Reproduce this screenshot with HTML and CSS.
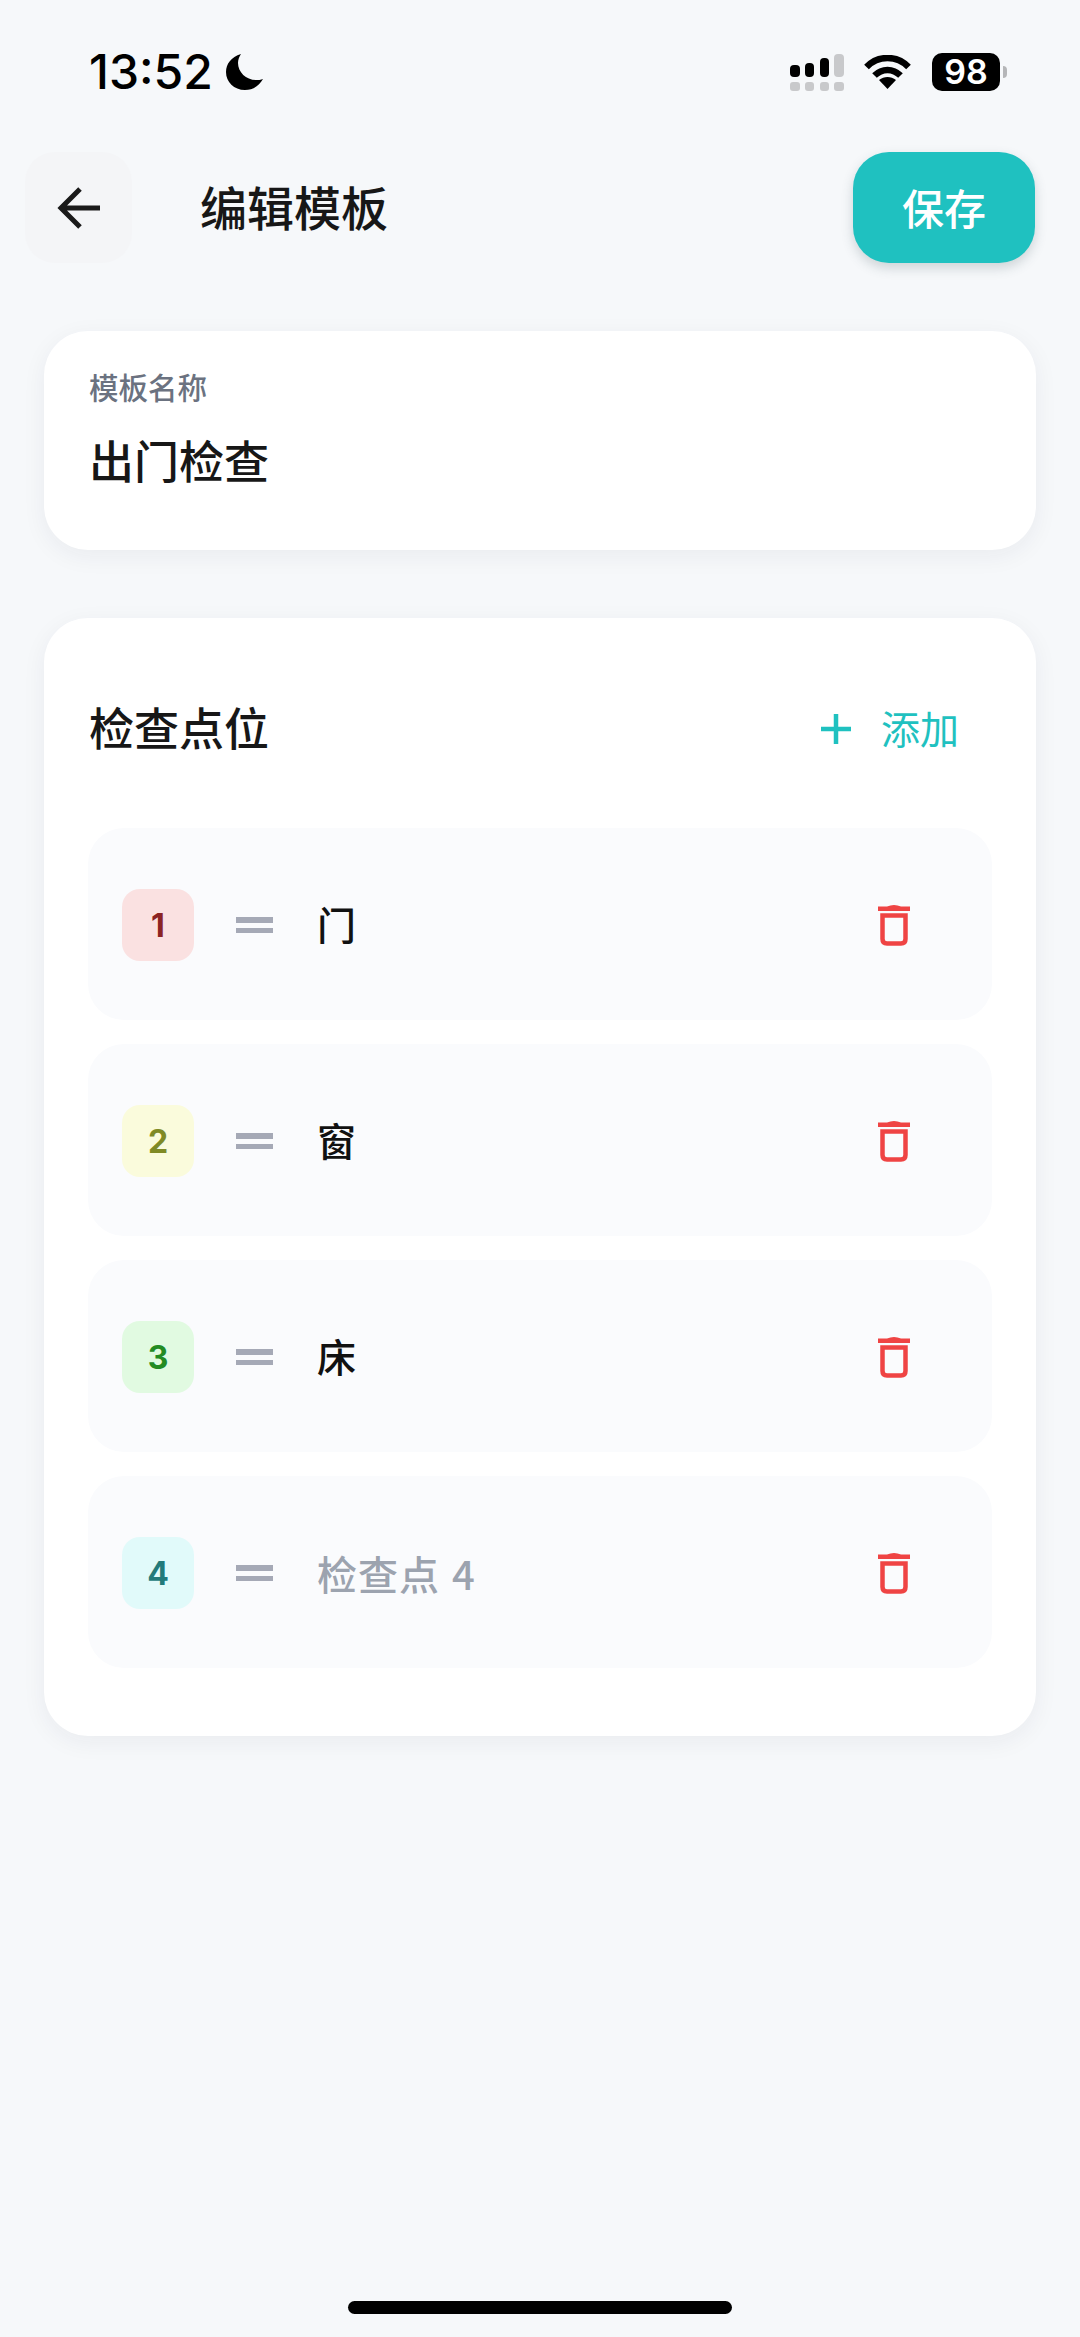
FILE: index.html
```html
<!DOCTYPE html>
<html lang="zh-CN">
<head>
    <meta charset="UTF-8">
    <meta name="viewport" content="width=device-width, initial-scale=1.0">
    <title>编辑模板</title>
    <link rel="stylesheet" href="styles.css">
</head>
<body>
    <div class="status-bar">
        <div class="status-left">
            <span class="time">13:52</span>
            <svg class="moon" viewBox="0 0 37 36"><path d="M15 0C5 3 0 10 0 18c0 10 8 18 19 18 8 0 14-4 18-11-2 1-5 1-7 1-10 0-18-8-18-17 0-3 1-6 3-9z"/></svg>
        </div>
        <div class="status-right">
            <div class="signal">
                <div class="signal-bars">
                    <i class="bar bar-1"></i>
                    <i class="bar bar-2"></i>
                    <i class="bar bar-3"></i>
                    <i class="bar bar-4"></i>
                </div>
                <div class="signal-dots">
                    <i></i><i></i><i></i><i></i>
                </div>
            </div>
            <svg class="wifi" viewBox="0 0 47 34">
                <path class="wifi-arc" d="M2.500 12C14 0 33 0 44.500 12"/>
                <path class="wifi-arc" d="M10.500 20.500C18 13 29 13 36.500 20.500"/>
                <path d="M23.500 34L15 25c5-4 12-4 17 0z"/>
            </svg>
            <div class="battery">98</div>
            <div class="battery-nub"></div>
        </div>
    </div>

    <div class="header">
        <div class="back-btn">
            <svg class="back-icon" viewBox="0 0 44 44"><path d="M43 22H4M23 3L4 22l19 19"/></svg>
        </div>
        <div class="title">编辑模板</div>
        <div class="save-btn"><span class="save-text">保存</span></div>
    </div>

    <div class="card name-card">
        <div class="name-label">模板名称</div>
        <div class="name-value">出门检查</div>
    </div>

    <div class="card points-card">
        <div class="points-head">
            <div class="points-title">检查点位</div>
            <div class="add-btn">
                <svg class="plus" viewBox="0 0 30 30"><path d="M0 15h30M15 0v30"/></svg>
                <span class="add-text">添加</span>
            </div>
        </div>

        <div class="point-list">
            <div class="point">
                <div class="badge badge-red">1</div>
                <div class="drag"><i></i><i></i></div>
                <div class="point-name">门</div>
                <svg class="trash" viewBox="0 0 32 42"><path class="trash-lid" d="M0 2.500h32v4.500H0zM9 2.500Q16 -0.500 23 2.500z"/><path class="trash-body" d="M4.500 11.500h23V35q0 4.500-4.500 4.500H9q-4.500 0-4.500-4.500z"/></svg>
            </div>
            <div class="point">
                <div class="badge badge-yellow">2</div>
                <div class="drag"><i></i><i></i></div>
                <div class="point-name">窗</div>
                <svg class="trash" viewBox="0 0 32 42"><path class="trash-lid" d="M0 2.500h32v4.500H0zM9 2.500Q16 -0.500 23 2.500z"/><path class="trash-body" d="M4.500 11.500h23V35q0 4.500-4.500 4.500H9q-4.500 0-4.500-4.500z"/></svg>
            </div>
            <div class="point">
                <div class="badge badge-green">3</div>
                <div class="drag"><i></i><i></i></div>
                <div class="point-name">床</div>
                <svg class="trash" viewBox="0 0 32 42"><path class="trash-lid" d="M0 2.500h32v4.500H0zM9 2.500Q16 -0.500 23 2.500z"/><path class="trash-body" d="M4.500 11.500h23V35q0 4.500-4.500 4.500H9q-4.500 0-4.500-4.500z"/></svg>
            </div>
            <div class="point">
                <div class="badge badge-cyan">4</div>
                <div class="drag"><i></i><i></i></div>
                <div class="point-name placeholder">检查点 4</div>
                <svg class="trash" viewBox="0 0 32 42"><path class="trash-lid" d="M0 2.500h32v4.500H0zM9 2.500Q16 -0.500 23 2.500z"/><path class="trash-body" d="M4.500 11.500h23V35q0 4.500-4.500 4.500H9q-4.500 0-4.500-4.500z"/></svg>
            </div>
        </div>
    </div>

    <div class="home-bar"></div>
</body>
</html>
```

FILE: styles.css
```css
* {
    box-sizing: border-box;
}
html, body {
    height: 100%;
}
body {
    margin: 0;
    display: flex;
    flex-direction: column;
    font-family: "Noto Sans CJK SC", "Noto Sans", sans-serif;
    background: #f6f8fa;
    color: #111;
}

/* status bar */
.status-bar {
    height: 152px;
    padding: 0 73px 8px 89px;
    display: flex;
    align-items: center;
    justify-content: space-between;
}
.status-left {
    display: flex;
    align-items: center;
    gap: 13px;
}
.time {
    font-family: Inter, sans-serif;
    font-size: 48px;
    font-weight: 500;
    line-height: 1;
    color: #000;
}
.moon {
    width: 37px;
    height: 36px;
    display: block;
}
.status-right {
    display: flex;
    align-items: center;
}
.signal {
    width: 54px;
    margin-right: 20px;
}
.signal-bars, .signal-dots {
    display: flex;
    justify-content: space-between;
}
.signal-bars {
    height: 23px;
    align-items: flex-end;
    margin-bottom: 5px;
}
.bar {
    width: 9.5px;
    background: #000;
    border-radius: 4px;
}
.bar-1 { height: 12px; }
.bar-2 { height: 14px; }
.bar-3 { height: 19px; }
.bar-4 { height: 23px; background: #c8c9cb; }
.signal-dots i {
    width: 9.5px;
    height: 9px;
    border-radius: 3px;
    background: #c8c9cb;
}
.wifi {
    width: 47px;
    height: 34px;
    margin-right: 21px;
}
.wifi-arc {
    fill: none;
    stroke: #000;
    stroke-width: 6.5;
}
.battery {
    width: 68px;
    height: 38px;
    border-radius: 10px;
    background: #000;
    color: #fff;
    font-family: Inter, sans-serif;
    font-size: 34px;
    font-weight: 600;
    line-height: 38px;
    text-align: center;
}
.battery-nub {
    width: 4px;
    height: 12px;
    margin-left: 3px;
    border-radius: 0 6px 6px 0;
    background: #b5b6b8;
}

/* header */
.header {
    height: 111px;
    padding: 0 45px 0 25px;
    display: flex;
    align-items: center;
    flex-shrink: 0;
}
.back-btn {
    width: 107px;
    height: 111px;
    border-radius: 30px;
    background: #f4f5f7;
    display: flex;
    align-items: center;
    justify-content: center;
}
.back-icon {
    width: 44px;
    height: 44px;
    fill: none;
    stroke: #1a1a1a;
    stroke-width: 5;
}
.title {
    margin: 0 0 5px 68px;
    font-size: 47px;
    font-weight: 500;
    color: #171717;
}
.save-btn {
    margin-left: auto;
    width: 182px;
    height: 111px;
    border-radius: 36px;
    background: #1fc1c0;
    color: #fff;
    font-size: 42px;
    font-weight: 500;
    display: flex;
    align-items: center;
    justify-content: center;
    box-shadow: 0 5px 12px rgba(60, 80, 90, 0.22);
}
.save-text {
    margin-bottom: 3px;
}

/* cards */
.card {
    margin: 68px 44px 0;
    background: #fff;
    border-radius: 44px;
    box-shadow: 0 6px 24px rgba(30, 40, 60, 0.06);
    flex-shrink: 0;
}
.name-card {
    height: 219px;
    padding: 33px 45px 0;
}
.name-label {
    font-size: 29.5px;
    line-height: 44px;
    font-weight: 500;
    color: #6b7280;
}
.name-value {
    margin-top: 22px;
    font-size: 45px;
    line-height: 60px;
    font-weight: 500;
    color: #171717;
}
.points-card {
    padding: 68px 44px;
}
.points-head {
    height: 86px;
    margin-bottom: 56px;
    display: flex;
    align-items: center;
    justify-content: space-between;
}
.points-title {
    margin: 0 0 5px 1px;
    font-size: 45px;
    font-weight: 500;
    color: #171717;
}
.add-btn {
    display: flex;
    align-items: center;
    gap: 30px;
    padding-right: 33px;
    font-size: 39px;
    color: #1fc1c0;
}
.add-text {
    margin-bottom: 5px;
}
.plus {
    width: 30px;
    height: 30px;
    fill: none;
    stroke: #1fc1c0;
    stroke-width: 4.5;
}

/* point rows */
.point-list {
    display: flex;
    flex-direction: column;
    gap: 24px;
}
.point {
    height: 192px;
    padding: 2px 82px 0 34px;
    border-radius: 36px;
    background: #fafbfd;
    display: flex;
    align-items: center;
}
.badge {
    width: 72px;
    height: 72px;
    border-radius: 18px;
    font-family: Inter, sans-serif;
    font-size: 32px;
    font-weight: 700;
    display: flex;
    align-items: center;
    justify-content: center;
}
.badge-red { background: #fae1e1; color: #8b2323; }
.badge-yellow { background: #fafbdc; color: #7f8a25; }
.badge-green { background: #e1fae1; color: #238b23; }
.badge-cyan { background: #e1fafa; color: #237a7a; }
.drag {
    width: 37px;
    margin-left: 42px;
    display: flex;
    flex-direction: column;
    gap: 5px;
}
.drag i {
    height: 5.5px;
    background: #a5a9b6;
}
.point-name {
    margin: 0 0 5px 44px;
    font-size: 39px;
    font-weight: 500;
    color: #111;
}
.placeholder {
    margin-bottom: 0;
    color: #9ca3af;
    font-size: 40px;
    letter-spacing: 1px;
    word-spacing: 2px;
}
.trash {
    width: 32px;
    height: 42px;
    margin-left: auto;
}
.trash-lid {
    fill: #ef4444;
}
.trash-body {
    fill: none;
    stroke: #ef4444;
    stroke-width: 4.5;
}

.home-bar {
    width: 384px;
    height: 13px;
    margin: auto auto 23px;
    border-radius: 7px;
    background: #000;
}
```
